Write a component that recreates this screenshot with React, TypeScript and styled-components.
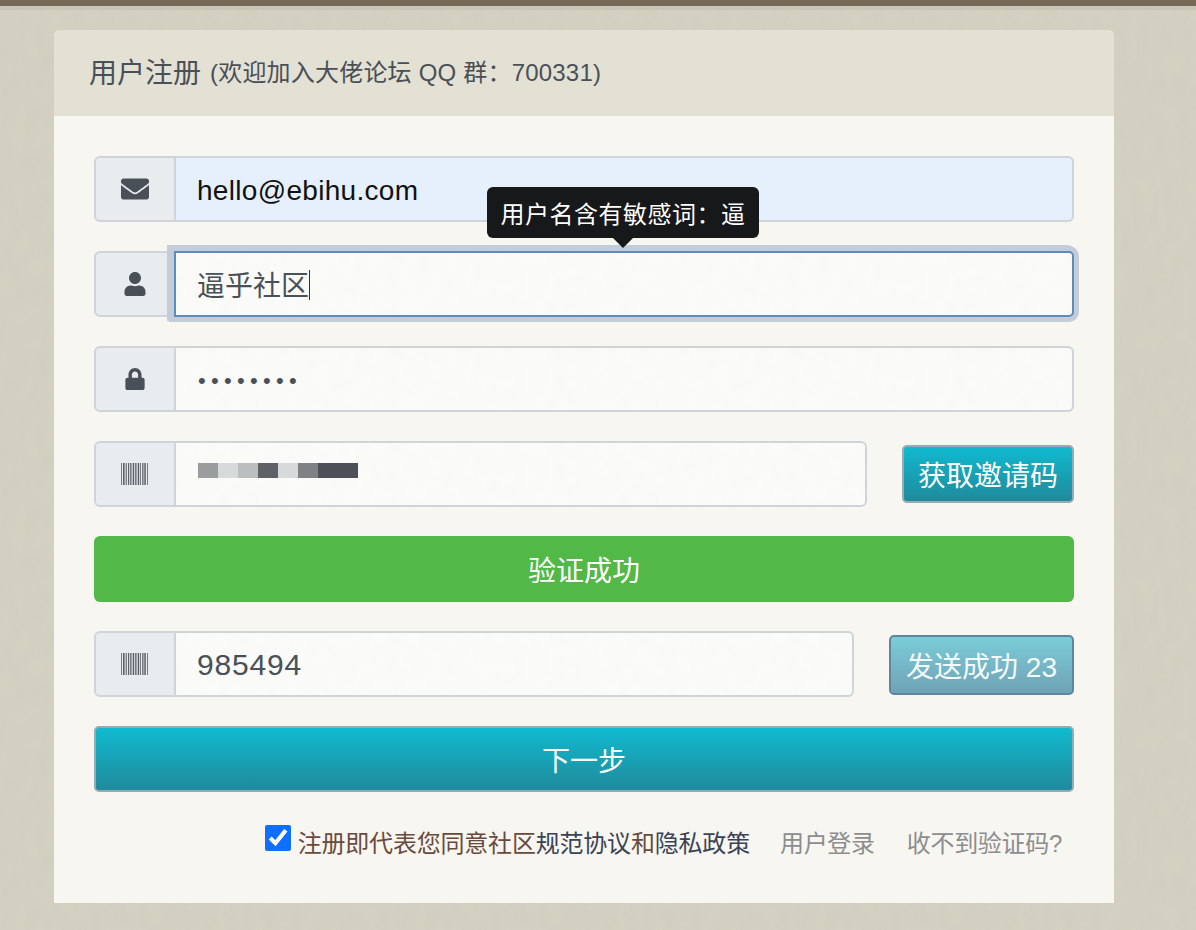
import React from 'react';
import styled, { createGlobalStyle, css } from 'styled-components';
import { FaEnvelope, FaUser, FaLock } from 'react-icons/fa';

const noise = (freq: string, opacity: number) =>
  `url("data:image/svg+xml,%3Csvg xmlns='http://www.w3.org/2000/svg' width='400' height='400'%3E%3Cfilter id='n'%3E%3CfeTurbulence type='fractalNoise' baseFrequency='${freq}' numOctaves='4' stitchTiles='stitch'/%3E%3CfeColorMatrix values='0 0 0 0 0.5 0 0 0 0 0.5 0 0 0 0 0.45 0.9 0 0 0 -0.2'/%3E%3C/filter%3E%3Crect width='400' height='400' filter='url(%23n)' opacity='${opacity}'/%3E%3C/svg%3E")`;

const GlobalStyle = createGlobalStyle`
  html, body {
    margin: 0;
    height: 930px;
    overflow: hidden;
  }
  body {
    background-color: #d4d1c1;
    background-image: ${noise('0.08 0.04', 0.22)};
    font-family: "Liberation Sans", "Noto Sans CJK SC", sans-serif;
  }
  * { box-sizing: border-box; }
`;

const TopBar = styled.div`
  height: 10px;
  border-top: 6px solid #75695a;
  background: #c9c5b5;
`;

const Card = styled.div`
  width: 1060px;
  margin: 20px 0 0 54px;
  border-radius: 6px 6px 0 0;
  overflow: hidden;
  background: #f7f6f1;
`;

const CardHeader = styled.div`
  height: 86px;
  padding: 0 35px 5px;
  display: flex;
  align-items: center;
  gap: 9px;
  background: #e2e1d4;
  color: #4b4f57;
`;

const Title = styled.span`
  font-size: 28px;
`;

const SubTitle = styled.span`
  font-size: 24px;
  letter-spacing: 0.2px;
`;

const CardBody = styled.div`
  padding: 40px 40px 50px;
  display: flex;
  flex-direction: column;
  gap: 29px;
`;

const Row = styled.div`
  display: flex;
  align-items: center;
  gap: 35px;
`;

const InputGroup = styled.div`
  position: relative;
  flex: 1;
  height: 66px;
  display: flex;
`;

const Prepend = styled.div`
  width: 82px;
  flex: none;
  display: flex;
  align-items: center;
  justify-content: center;
  background: #e9ecef;
  border: 2px solid #ced4da;
  border-radius: 6px 0 0 6px;
  color: #495057;
  font-size: 28px;
`;

const fieldBase = css`
  flex: 1;
  min-width: 0;
  height: 66px;
  padding: 0 21px;
  border: 2px solid #ced4da;
  border-left: 0;
  border-radius: 0 6px 6px 0;
  background-color: #fbfbfa;
  background-image: ${noise('0.09 0.07', 0.05)};
  color: #495057;
  font-family: "Liberation Sans", "Noto Sans CJK SC", sans-serif;
  font-size: 28px;
  outline: none;
`;

const Field = styled.input<{ $filled?: boolean; $digits?: boolean }>`
  ${fieldBase}
  ${({ $filled }) =>
    $filled &&
    css`
      padding-top: 4px;
      background: #e6effc;
      color: #111;
      letter-spacing: 0.3px;
    `}
  ${({ $digits }) =>
    $digits &&
    css`
      padding-top: 2px;
      font-size: 30px;
      letter-spacing: 0.8px;
    `}
  &[type='password'] {
    padding-top: 4px;
    padding-left: 22px;
    letter-spacing: 5.3px;
    font-size: 22px;
  }
`;

const FocusField = styled(Field)`
  border: 2px solid #5f8dbb;
  border-radius: 0 5px 5px 0;
  margin-left: -2px;
  box-shadow: 0 0 0 5px #c3cdd9, -2px -1px 0 5px #c3cdd9;
  position: relative;
`;

const Caret = styled.span`
  position: absolute;
  left: 215px;
  top: 19px;
  width: 1px;
  height: 30px;
  background: #333;
`;

const MosaicField = styled.div`
  ${fieldBase}
  display: flex;
  align-items: center;
  padding: 0 0 8px 22px;
`;

const MosaicCell = styled.span<{ $color: string; $wide?: boolean }>`
  width: ${({ $wide }) => ($wide ? 40 : 20)}px;
  height: 15px;
  background: ${({ $color }) => $color};
`;

const Tooltip = styled.div`
  position: absolute;
  left: 393px;
  top: -64px;
  width: 272px;
  height: 51px;
  display: flex;
  align-items: center;
  justify-content: center;
  border-radius: 6px;
  background: #17181a;
  color: #fff;
  font-size: 24px;
  letter-spacing: 0.5px;
  z-index: 2;
  &::after {
    content: '';
    position: absolute;
    left: 125px;
    bottom: -10px;
    border-style: solid;
    border-width: 11px 11px 0;
    border-color: #17181a transparent transparent;
  }
`;

const ActionButton = styled.button<{ $muted?: boolean; $block?: boolean }>`
  flex: none;
  height: ${({ $block }) => ($block ? 66 : 58)}px;
  width: ${({ $block }) => ($block ? '100%' : 'auto')};
  padding: 0 14px;
  border: 2px solid #9aaab0;
  border-radius: 5px;
  background: linear-gradient(#10bad0, #1f8a9b);
  color: #fff;
  font-family: inherit;
  font-size: 28px;
  white-space: nowrap;
  ${({ $muted }) =>
    $muted &&
    css`
      height: 60px;
      margin-top: 2px;
      padding: 0 15px;
      border-color: #5f86a0;
      background: linear-gradient(#7bcdd8, #6fa2b5);
      color: #f4fbfc;
    `}
`;

const SuccessBar = styled.div`
  height: 66px;
  display: flex;
  align-items: center;
  justify-content: center;
  border-radius: 6px;
  background: #52b848;
  color: #fff;
  font-size: 28px;
`;

const Footer = styled.div`
  display: flex;
  align-items: center;
  justify-content: flex-end;
  padding-right: 12px;
  margin-top: 6px;
  height: 26px;
  padding-top: 2px;
  font-size: 24px;
  white-space: nowrap;
`;

const Agree = styled.label`
  display: flex;
  align-items: center;
  gap: 7px;
  color: #6a4a3d;
  letter-spacing: -0.2px;
`;

const Check = styled.input`
  width: 26px;
  height: 26px;
  margin: -6px 0 0;
  accent-color: #0f6fff;
`;

const PolicyLink = styled.span`
  color: #3a4257;
`;

const MutedLink = styled.a<{ $gap: number }>`
  margin-left: ${({ $gap }) => $gap}px;
  color: #8b8d8f;
  letter-spacing: -0.3px;
`;

const barcodeBars = [0, 2, 3.5, 5, 7, 9, 10.5, 12, 14, 15.5, 17, 19, 21, 22.5, 24, 26];

const BarcodeIcon = () => (
  <svg width="28" height="22" viewBox="0 0 28 22" fill="#5c6168" aria-hidden="true">
    {barcodeBars.map((x, i) => (
      <rect key={x} x={x} width={i % 3 === 1 ? 1.2 : 0.8} height="22" />
    ))}
  </svg>
);

const mosaic = [
  { color: '#9a9c9d' },
  { color: '#d8d9da' },
  { color: '#bcbdbe' },
  { color: '#5f6167' },
  { color: '#d8d9da' },
  { color: '#7f8285' },
  { color: '#4e5057', wide: true },
];

const App = () => {
  return (
    <>
      <GlobalStyle />
      <TopBar />
      <Card>
        <CardHeader>
          <Title>用户注册</Title>
          <SubTitle>(欢迎加入大佬论坛 QQ 群：700331)</SubTitle>
        </CardHeader>
        <CardBody>
          <Row>
            <InputGroup>
              <Prepend>
                <FaEnvelope />
              </Prepend>
              <Field $filled readOnly value="hello@ebihu.com" />
            </InputGroup>
          </Row>
          <Row>
            <InputGroup>
              <Tooltip>用户名含有敏感词：逼</Tooltip>
              <Prepend>
                <FaUser size={24} />
              </Prepend>
              <FocusField readOnly value="逼乎社区" />
              <Caret />
            </InputGroup>
          </Row>
          <Row>
            <InputGroup>
              <Prepend>
                <FaLock size={22} />
              </Prepend>
              <Field type="password" readOnly value="12345678" />
            </InputGroup>
          </Row>
          <Row>
            <InputGroup>
              <Prepend>
                <BarcodeIcon />
              </Prepend>
              <MosaicField>
                {mosaic.map((cell, i) => (
                  <MosaicCell key={i} $color={cell.color} $wide={cell.wide} />
                ))}
              </MosaicField>
            </InputGroup>
            <ActionButton>获取邀请码</ActionButton>
          </Row>
          <SuccessBar>验证成功</SuccessBar>
          <Row>
            <InputGroup>
              <Prepend>
                <BarcodeIcon />
              </Prepend>
              <Field $digits readOnly value="985494" />
            </InputGroup>
            <ActionButton $muted>发送成功 23</ActionButton>
          </Row>
          <ActionButton $block>下一步</ActionButton>
          <Footer>
            <Agree>
              <Check type="checkbox" defaultChecked />
              <span>
                注册即代表您同意社区<PolicyLink>规范协议</PolicyLink>和<PolicyLink>隐私政策</PolicyLink>
              </span>
            </Agree>
            <MutedLink $gap={30}>用户登录</MutedLink>
            <MutedLink $gap={32}>收不到验证码?</MutedLink>
          </Footer>
        </CardBody>
      </Card>
    </>
  );
};

export default App;
